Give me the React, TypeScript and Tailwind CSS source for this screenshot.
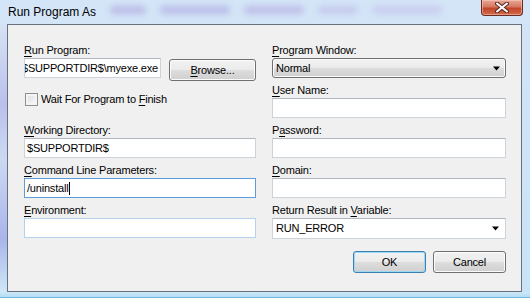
import React from 'react';

const labelCls = 'block h-[14px] leading-[14px] text-[11px] tracking-[-0.2px] text-black whitespace-nowrap';
const gradCls = 'bg-[linear-gradient(to_bottom,#f2f2f2_0%,#ebebeb_48%,#dddddd_52%,#cfcfcf_100%)]';
const btnCls = `flex items-center justify-center h-[22px] rounded-[3px] border text-[11px] tracking-[-0.2px] text-black ${gradCls}`;

function Mn({ children }: { children: React.ReactNode }) {
  return <span className="underline underline-offset-[2px] decoration-[1px]">{children}</span>;
}

function TextBox({ tone = 'gray', children }: { tone?: 'gray' | 'blue' | 'focus'; children?: React.ReactNode }) {
  const border =
    tone === 'focus'
      ? 'border-[#5d9cd8]'
      : tone === 'blue'
        ? 'border-[#b4d2ee]'
        : 'border-[#ccd3db] border-t-[#aeb6c0]';
  return (
    <div className={`h-[20px] w-full border ${border} bg-white flex items-center px-[2px] text-[11px] tracking-[-0.2px] text-black overflow-hidden whitespace-nowrap`}>
      {children}
    </div>
  );
}

function Arrow() {
  return (
    <svg width="8" height="5" viewBox="0 0 8 5" className="shrink-0">
      <path d="M0 0.5 H7 L3.5 4.5 Z" fill="#000" />
    </svg>
  );
}

export default function App() {
  return (
    <div className="w-[530px] h-[298px] flex flex-col overflow-hidden bg-[linear-gradient(to_bottom,#d4e5f7,#cbe3f6_60%,#c6e4f7)] font-['Liberation_Sans',Arial,sans-serif]">
      {/* Title bar */}
      <div className="h-[24px] flex items-start shrink-0">
        <span className="pl-[8px] pt-[5px] text-[12px] leading-[14px] text-black whitespace-nowrap">Run Program As</span>
        <div className="flex-1 flex items-center gap-[14px] pt-[6px] pl-[14px] opacity-75">
          <span className="h-[8px] w-[36px] rounded-full bg-[#b3ade2] blur-[3px]" />
          <span className="h-[8px] w-[70px] rounded-full bg-[#b1aee4] blur-[3px]" />
          <span className="h-[8px] w-[60px] rounded-full bg-[#b8b0e4] blur-[3px]" />
          <span className="h-[8px] w-[40px] rounded-full bg-[#c0c0ea] blur-[3px]" />
          <span className="h-[8px] w-[70px] rounded-full bg-[#c4c5ec] blur-[3px]" />
        </div>
        <div className="mr-[7px] w-[42px] h-[16px] rounded-b-[4px] border border-t-0 border-[#6b2a22] bg-[linear-gradient(to_bottom,#e8a797_0%,#d5785f_45%,#c2452b_55%,#d36a4a_100%)] flex items-center justify-center shadow-[inset_0_0_0_1px_rgba(255,220,210,0.45)]">
          <svg width="14" height="11" viewBox="0 0 14 11">
            <path d="M2 1.5 L12 9.5 M12 1.5 L2 9.5" stroke="#5a2a24" strokeWidth="4" strokeLinecap="round" />
            <path d="M2 1.5 L12 9.5 M12 1.5 L2 9.5" stroke="#ffffff" strokeWidth="2" strokeLinecap="round" />
          </svg>
        </div>
      </div>

      {/* Middle: glass sides + client area */}
      <div className="flex flex-1 min-h-0">
        <div className="w-[7px] shrink-0 bg-[linear-gradient(to_bottom,#d6e2f5,#b9c0ec_30%,#cdd9f2_50%,#a9b5ea_80%,#cfe7f7)]" />
        <div className="w-[515px] h-[268px] border border-[#66717d] bg-[#f0f0f0] pt-[18px] pl-[16px] pr-[15px]">
          <div className="grid grid-cols-[232px_234px] gap-x-[16px]">
            {/* Left column */}
            <div className="flex flex-col">
              <span className={labelCls}><Mn>R</Mn>un Program:</span>
              <div className="mt-[1px] flex items-start">
                <div className="w-[137px] shrink-0">
                  <div className="h-[20px] border border-[#ccd3db] border-t-[#aeb6c0] bg-white flex items-center justify-end pr-[2px] text-[11px] tracking-[-0.2px] text-black overflow-hidden whitespace-nowrap">
                    <span>$SUPPORTDIR$\myexe.exe</span>
                  </div>
                </div>
                <button className={`${btnCls} ml-[8px] mt-[1px] w-[87px] border-[#707070] shadow-[inset_0_0_0_1px_#fbfbfb]`}>
                  <Mn>B</Mn>rowse...
                </button>
              </div>
              <div className="mt-[12px] ml-[1px] flex items-center gap-[3px] h-[13px]">
                <div className="w-[13px] h-[13px] border border-[#8e8f8f] bg-[linear-gradient(to_bottom_right,#dcdcdc,#fbfbfb)] shadow-[inset_0_0_0_2px_#f4f4f4] shrink-0" />
                <span className="text-[11px] leading-[13px] tracking-[-0.2px] text-black whitespace-nowrap">
                  Wait For Program to <Mn>F</Mn>inish
                </span>
              </div>
              <span className={`${labelCls} mt-[17px]`}><Mn>W</Mn>orking Directory:</span>
              <div className="mt-[1px]">
                <TextBox>$SUPPORTDIR$</TextBox>
              </div>
              <span className={`${labelCls} mt-[5px]`}><Mn>C</Mn>ommand Line Parameters:</span>
              <div className="mt-[1px]">
                <TextBox tone="focus">
                  <span>/uninstall</span>
                  <span className="ml-[1px] w-[1px] h-[13px] bg-black" />
                </TextBox>
              </div>
              <span className={`${labelCls} mt-[5px]`}><Mn>E</Mn>nvironment:</span>
              <div className="mt-[1px]">
                <div className="h-[21px]">
                  <TextBox tone="blue" />
                </div>
              </div>
            </div>

            {/* Right column */}
            <div className="flex flex-col">
              <span className={labelCls}><Mn>P</Mn>rogram Window:</span>
              <div className={`mt-[1px] h-[20px] flex items-center justify-between pl-[3px] pr-[4px] rounded-[3px] border border-[#707070] shadow-[inset_0_0_0_1px_#fbfbfb] text-[11px] tracking-[-0.2px] text-black ${gradCls}`}>
                <span>Normal</span>
                <Arrow />
              </div>
              <span className={`${labelCls} mt-[5px]`}><Mn>U</Mn>ser Name:</span>
              <div className="mt-[1px]">
                <TextBox />
              </div>
              <span className={`${labelCls} mt-[5px]`}>P<Mn>a</Mn>ssword:</span>
              <div className="mt-[1px]">
                <TextBox />
              </div>
              <span className={`${labelCls} mt-[5px]`}><Mn>D</Mn>omain:</span>
              <div className="mt-[1px]">
                <TextBox />
              </div>
              <span className={`${labelCls} mt-[5px]`}>Return Result in <Mn>V</Mn>ariable:</span>
              <div className="mt-[1px] h-[21px] border border-[#ccd3db] border-t-[#aeb6c0] bg-white flex items-center justify-between pl-[3px] pr-[5px] text-[11px] tracking-[-0.2px] text-black">
                <span>RUN_ERROR</span>
                <Arrow />
              </div>
              <div className="mt-[12px] flex justify-end gap-[7px]">
                <button className={`${btnCls} w-[73px] border-[#3c7fb1] shadow-[inset_0_0_0_1px_#9fd8f2]`}>OK</button>
                <button className={`${btnCls} w-[73px] border-[#707070] shadow-[inset_0_0_0_1px_#fbfbfb]`}>Cancel</button>
              </div>
            </div>
          </div>
        </div>
        <div className="flex-1 bg-[linear-gradient(to_bottom,#d3e3f6,#c9e3f6)]" />
      </div>

      {/* Bottom glass edge */}
      <div className="h-[6px] shrink-0 bg-[linear-gradient(to_bottom,#cde9f8,#b6dcf3_80%,#3d9fcf)]" />
    </div>
  );
}
